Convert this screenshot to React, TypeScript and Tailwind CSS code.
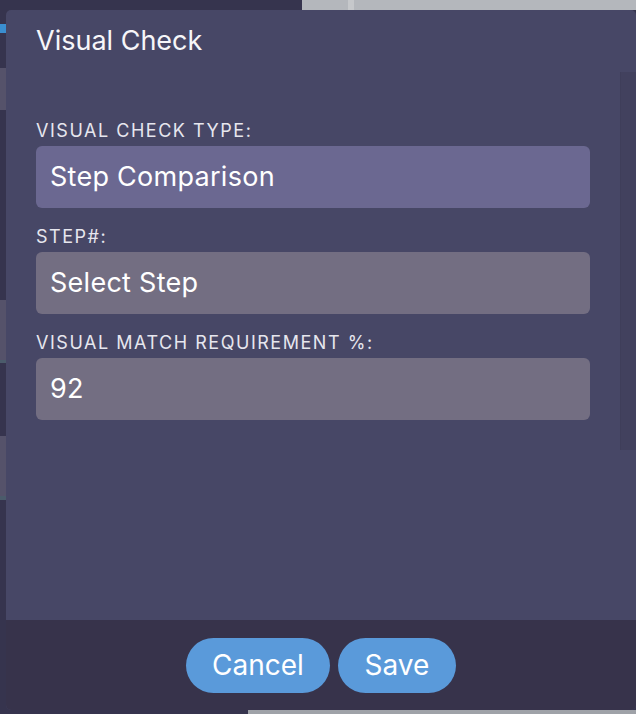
import React from "react";

// ─────────────────────────────────────────────
// Types
// ─────────────────────────────────────────────

interface FieldProps {
  label: string;
  value: string;
  highlighted?: boolean;
}

// ─────────────────────────────────────────────
// Field: uppercase label + filled box
// ─────────────────────────────────────────────

function Field({ label, value, highlighted }: FieldProps) {
  return (
    <div className="flex flex-col">
      <label className="text-[18px] leading-[20px] tracking-[0.085em] text-[#e6e6ee]">
        {label}
      </label>
      <div
        className={
          highlighted
            ? "mt-[5px] h-[62px] rounded-[6px] bg-[#6b6891] pl-[14px] flex items-center text-[27px] tracking-[0.01em] text-white"
            : "mt-[5px] h-[62px] rounded-[6px] bg-[#736e82] pl-[14px] flex items-center text-[27px] tracking-[0.01em] text-white"
        }
      >
        {value}
      </div>
    </div>
  );
}

// ─────────────────────────────────────────────
// Page behind the dialog
// ─────────────────────────────────────────────

function Backdrop() {
  return (
    <div className="flex h-full flex-col bg-[#36344e]">
      {/* top band */}
      <div className="flex h-[10px]">
        <div className="w-[302px]" />
        <div className="flex flex-1 bg-[#b4b7bc]">
          <div className="w-[46px]" />
          <div className="w-[6px] bg-[#c6c8cb]" />
        </div>
      </div>

      {/* sidebar edge peeking out */}
      <div className="flex flex-1 flex-col w-[6px]">
        <div className="mt-[14px] h-[9px] bg-[#3a8ed0]" />
        <div className="mt-[35px] h-[42px] bg-[#55526a]" />
        <div className="mt-[190px] h-[60px] bg-[#55526a]" />
        <div className="h-[3px] bg-[#4b5b6b]" />
        <div className="mt-[73px] h-[60px] bg-[#55526a]" />
        <div className="h-[4px] bg-[#4b5b6b]" />
      </div>

      {/* bottom band */}
      <div className="flex h-[4px]">
        <div className="w-[248px]" />
        <div className="flex-1 bg-[#9fa2a8]" />
      </div>
    </div>
  );
}

// ─────────────────────────────────────────────
// App
// ─────────────────────────────────────────────

export default function App() {
  return (
    <div className="relative h-[714px] w-[636px] overflow-hidden font-['Inter','Liberation_Sans',sans-serif]">
      <Backdrop />

      {/* Dialog */}
      <div className="absolute left-[6px] top-[10px] flex h-[700px] w-[630px] flex-col overflow-hidden rounded-[5px] bg-[#474766]">
        {/* Header */}
        <div className="h-[62px] pl-[30px] pt-[14px]">
          <h2 className="text-[27px] leading-[34px] text-[#f6f6f9]">Visual Check</h2>
        </div>

        {/* Scroll area */}
        <div className="flex-1">
          <div className="flex h-[378px]">
            <div className="flex flex-1 flex-col gap-[19px] px-[30px] pt-[49px]">
              <Field label="VISUAL CHECK TYPE:" value="Step Comparison" highlighted />
              <Field label="STEP#:" value="Select Step" />
              <Field label="VISUAL MATCH REQUIREMENT %:" value="92" />
            </div>
            {/* scrollbar track */}
            <div className="w-[16px] border-l border-[#3f3e5a] bg-[#42415e]" />
          </div>
        </div>

        {/* Footer */}
        <div className="flex h-[90px] items-center justify-center gap-[8px] bg-[#37334b]">
          <button className="h-[55px] w-[144px] rounded-full bg-[#5a9ada] text-[28px] text-white">
            Cancel
          </button>
          <button className="h-[55px] w-[118px] rounded-full bg-[#5a9ada] text-[28px] text-white">
            Save
          </button>
        </div>
      </div>
    </div>
  );
}
